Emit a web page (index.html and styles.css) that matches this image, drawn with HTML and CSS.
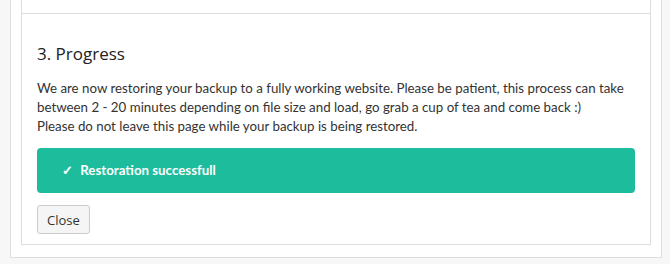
FILE: index.html
```html
<!DOCTYPE html>
<html lang="en">
<head>
	<meta charset="UTF-8">
	<title>Restore backup</title>
	<link rel="stylesheet" href="styles.css">
</head>
<body>
	<div class="panel">
		<div class="step step-done"></div>

		<div class="step">
			<h3>3. Progress</h3>
			<p>We are now restoring your backup to a fully working website. Please be patient, this process can take between 2 - 20 minutes depending on file size and load, go grab a cup of tea and come back :)<br>
			Please do not leave this page while your backup is being restored.</p>

			<div class="alert">
				<span class="check">&#10003;</span> Restoration successfull
			</div>

			<button class="btn">Close</button>
		</div>
	</div>
</body>
</html>
```

FILE: styles.css
```css
* {
	box-sizing: border-box;
}

body {
	margin: 0;
	background-color: #f7f7f7;
	font-family: Lato, "Open Sans", sans-serif;
	font-size: 13.3px;
	line-height: 19px;
	color: #333;
}

.panel {
	width: 652px;
	margin-left: 10px;
	padding: 0 10px 12px;
	background-color: #fff;
	border: 1px solid #ddd;
	border-top: 0;
}

.step {
	border: 1px solid #ddd;
	border-top: 0;
	padding: 28px 15px 10px;
}

.step-done {
	height: 14px;
	padding: 0;
}

h3 {
	margin: 0 0 13px;
	font-family: "Open Sans", sans-serif;
	font-size: 17px;
	font-weight: normal;
	line-height: 24px;
	color: #222;
}

p {
	margin: 0 0 12px;
}

.alert {
	height: 45px;
	line-height: 45px;
	padding: 0 25px;
	margin-bottom: 12px;
	background-color: #1dbc9c;
	color: white;
	font-weight: bold;
	border-radius: 4px;
}

.check {
	margin-right: 4px;
}

.btn {
	height: 29px;
	padding: 0 9px;
	font-family: "Open Sans", sans-serif;
	font-size: 13px;
	color: #333;
	background-color: #f5f5f5;
	border: 1px solid #ccc;
	border-radius: 3px;
}
```
